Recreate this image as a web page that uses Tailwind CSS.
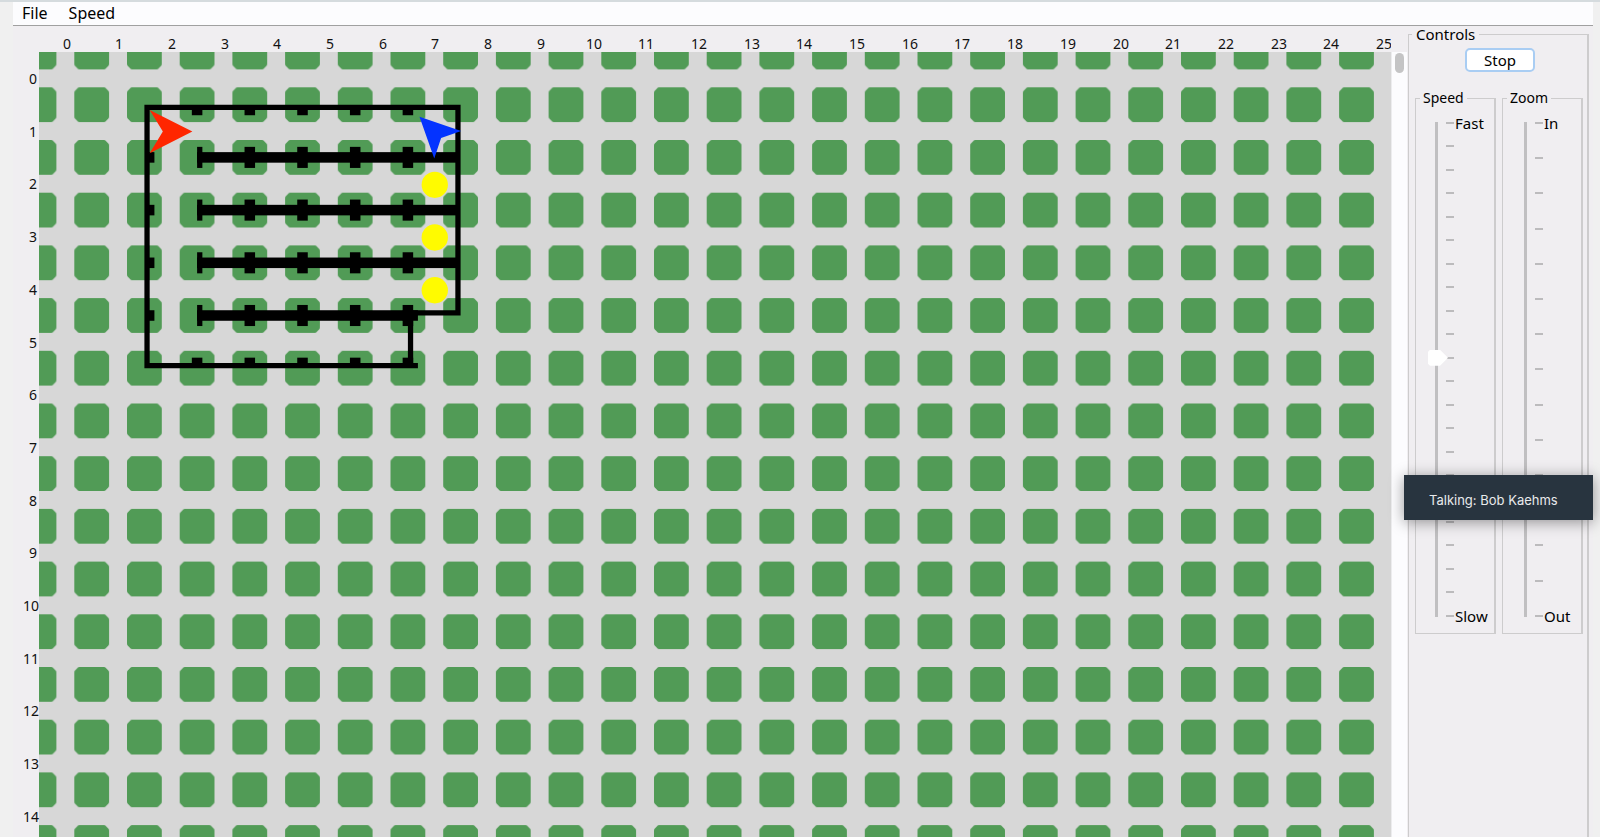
<!DOCTYPE html>
<html lang="en">
<head>
<meta charset="utf-8">
<title>World</title>
<script src="https://cdn.jsdelivr.net/npm/@tailwindcss/browser@4"></script>
</head>
<body class="flex h-screen flex-col overflow-hidden border-t-2 border-[#d5dbde] bg-[#f0f0f0] pr-[7px] pl-[13px] font-['Noto_Sans','Open_Sans',sans-serif] text-[15px] leading-5 text-black">
  <nav class="flex h-6 shrink-0 items-center gap-[21px] border-b border-[#a0a0a0] bg-[#fcfcfe] pb-px pl-[9px] text-base leading-5" aria-label="Menu bar">
    <button type="button">File</button>
    <button type="button">Speed</button>
  </nav>

  <main class="flex min-h-0 flex-1 bg-[#f0eef1]">
    <svg class="h-full min-w-0 flex-1" role="img" aria-label="World grid">
      <defs>
        <pattern id="blocks" x="50" y="50" width="100" height="100" patternUnits="userSpaceOnUse">
          <path fill="#519b56" d="M27 17H73Q76 17 77 19L82 24Q83 25 83 28V72Q83 75 82 76L77 81Q76 83 73 83H27Q24 83 23 81L18 76Q17 75 17 72V28Q17 25 18 24L23 19Q24 17 27 17Z"/>
        </pattern>
      </defs>
      <g transform="translate(26 26) scale(.527)">
        <rect width="4000" height="3000" fill="#d7d7d7"/>
        <rect width="2550" height="3000" fill="url(#blocks)"/>
        <!-- outer walls -->
        <path d="M200 100H800V500H710V590H719V600H200ZM210 110V590H700V510H690V490H790V110Z" fill-rule="evenodd"/>
        <g id="walls"></g>
        <g fill="#fffb00"><circle cx="751" cy="252" r="25"/><circle cx="751" cy="352" r="25"/><circle cx="751" cy="452" r="25"/></g>
        <path fill="#ff2600" d="M210 110L291 151L210 192L235 151Z"/>
        <path fill="#0433ff" d="M722 123L801 150L763 163L750 202Z"/>
      </g>
      <g id="labels" class="text-[14px]" fill="#111" text-anchor="middle"></g>
    </svg>

    <div class="mt-[26px] w-4 shrink-0 border-l border-[#ececee] bg-[#fcfcfe] pt-px">
      <div class="ml-[3px] h-5 w-[9px] rounded-full bg-[#c4c4c5]"></div>
    </div>

    <aside class="relative w-[186px] shrink-0 pr-1 pl-px">
      <fieldset class="h-full border border-r-2 border-b-0 border-[#cdcccd] pr-1 pl-[6px]">
        <legend class="-ml-[3px] px-1 leading-4">Controls</legend>
        <div class="flex justify-center pt-[6px] pb-[18px] pl-[2px]">
          <button type="button" class="h-6 w-[70px] rounded-[5px] border-2 border-[#a9cdf3] bg-white leading-4">Stop</button>
        </div>
        <div class="grid grid-cols-2 gap-[6px]">
          <fieldset class="min-w-0 border border-r-2 border-[#cdcccd] pb-4">
            <legend class="ml-1 px-[3px] text-[14px] leading-4"><label for="speed">Speed</label></legend>
            <div class="mt-4 flex h-[495px] pl-3">
              <input id="speed" type="range" min="0" max="21" value="11" class="relative -mt-[8px] -mb-[8px] h-[511px] w-5 appearance-none bg-[linear-gradient(#c0bfc1,#c0bfc1)] bg-[length:3px_495px] bg-[position:7px_8px] bg-no-repeat [direction:rtl] [writing-mode:vertical-lr] [&::-webkit-slider-thumb]:h-4 [&::-webkit-slider-thumb]:w-5 [&::-webkit-slider-thumb]:appearance-none [&::-webkit-slider-thumb]:bg-white [&::-webkit-slider-thumb]:[clip-path:polygon(0_12%,10%_0,60%_0,100%_50%,60%_100%,10%_100%,0_88%)]">
              <div class="-ml-[2px] flex flex-col justify-between" data-steps="21" data-top="Fast" data-bottom="Slow"></div>
            </div>
          </fieldset>
          <fieldset class="min-w-0 border border-r-2 border-[#cdcccd] pb-4">
            <legend class="ml-1 px-[3px] text-[14px] leading-4"><label for="zoom">Zoom</label></legend>
            <div class="mt-4 flex h-[495px] pl-[14px]">
              <input id="zoom" type="range" min="0" max="14" value="3" class="relative -mt-[8px] -mb-[8px] h-[511px] w-5 appearance-none bg-[linear-gradient(#c0bfc1,#c0bfc1)] bg-[length:3px_495px] bg-[position:7px_8px] bg-no-repeat [direction:rtl] [writing-mode:vertical-lr] [&::-webkit-slider-thumb]:h-4 [&::-webkit-slider-thumb]:w-5 [&::-webkit-slider-thumb]:appearance-none [&::-webkit-slider-thumb]:bg-white [&::-webkit-slider-thumb]:[clip-path:polygon(0_12%,10%_0,60%_0,100%_50%,60%_100%,10%_100%,0_88%)]">
              <div class="-ml-[2px] flex flex-col justify-between" data-steps="14" data-top="In" data-bottom="Out"></div>
            </div>
          </fieldset>
        </div>
      </fieldset>
      <div role="status" class="absolute top-[449px] right-0 -left-[3px] flex h-[45px] items-center bg-[#28343f] pt-1 pl-[25px] font-['Inter',sans-serif] text-[13px] text-[#e8eaec] shadow-[0_2px_14px_rgba(0,0,0,0.4)]">Talking: Bob Kaehms</div>
    </aside>
  </main>

  <script>
    const NS = 'http://www.w3.org/2000/svg';
    const add = (parent, tag, attrs, text) => {
      const el = document.createElementNS(NS, tag);
      for (const k in attrs) el.setAttribute(k, attrs[k]);
      if (text !== undefined) el.textContent = text;
      parent.append(el);
    };
    const walls = document.getElementById('walls');
    const box = (x1, y1, x2, y2) => add(walls, 'rect', { x: x1, y: y1, width: x2 - x1, height: y2 - y1 });
    // walls between the streets, each with a cap and four joints
    for (let y = 200; y <= 500; y += 100) {
      box(300, y - 10, y === 500 ? 719 : 795, y + 10);
      box(300, y - 20, 310, y + 20);
      box(205, y - 10, 219, y + 10);
      for (let x = 400; x <= 700; x += 100) box(x - 10, y - 20, x + 10, y + 20);
    }
    for (let x = 300; x <= 700; x += 100) {
      box(x - 10, 105, x + 10, 120);
      box(x - 10, 580, x + 10, 595);
    }
    // axis numbers
    const labels = document.getElementById('labels');
    const cell = 52.7;
    for (let i = 0; i <= 25; i++) add(labels, 'text', { x: Math.round(53.5 + cell * i), y: 23 }, i);
    for (let i = 0; i <= 14; i++) add(labels, 'text', { x: i < 10 ? 20 : 18, y: Math.round(58 + cell * i) }, i);
    // slider ticks
    document.querySelectorAll('[data-steps]').forEach(el => {
      const n = +el.dataset.steps;
      for (let i = 0; i <= n; i++) {
        const row = document.createElement('div');
        row.className = 'flex h-[2px] items-center gap-px';
        const tick = document.createElement('span');
        tick.className = 'h-[2px] w-2 shrink-0 bg-[#bcbbbd]';
        row.append(tick);
        if (i === 0 || i === n) {
          const t = document.createElement('span');
          t.textContent = i ? el.dataset.bottom : el.dataset.top;
          row.append(t);
        }
        el.append(row);
      }
    });
  </script>
</body>
</html>
